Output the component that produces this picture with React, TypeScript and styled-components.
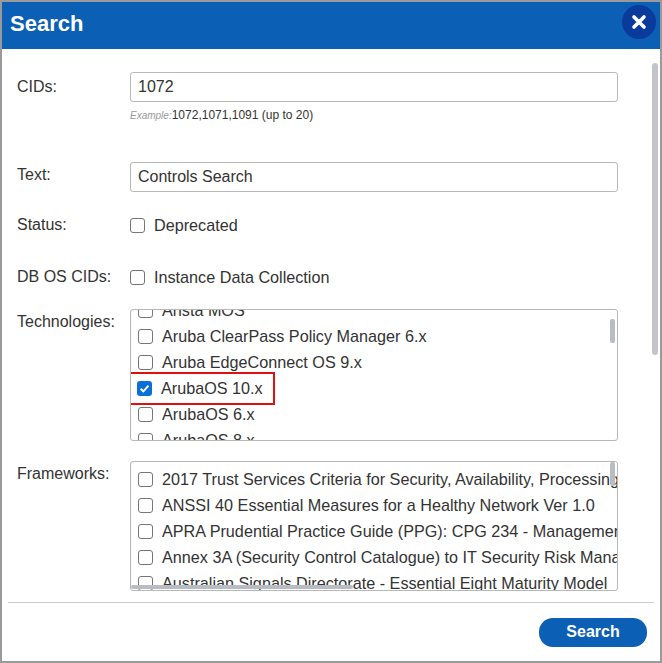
import React from 'react';
import styled, { createGlobalStyle } from 'styled-components';

const Global = createGlobalStyle`
  html, body { margin: 0; padding: 0; background: #fff; }
  body { font-family: "Liberation Sans", Arial, sans-serif; color: #333; }
`

const Dialog = styled.div`
  width: 662px;
  height: 663px;
  box-sizing: border-box;
  border: 2px solid #9a9a9a;
  display: flex;
  flex-direction: column;
  background: #fff;
`

const Header = styled.div`
  height: 47px;
  background: #0b5fb4;
  display: flex;
  align-items: center;
  justify-content: space-between;
  padding: 0 4px 0 8px;
  flex-shrink: 0;
`

const Title = styled.h1`
  margin: 0;
  color: #fff;
  font-size: 22px;
  font-weight: bold;
  margin-top: -4px;
`

const Close = styled.div`
  width: 34px;
  height: 34px;
  border-radius: 50%;
  background: #0a3a9c;
  color: #fff;
  display: flex;
  align-items: center;
  justify-content: center;
  margin-top: -8px;
`

const Body = styled.div`
  position: relative;
  flex: 1;
  padding: 23px 36px 0 9px;
  border-bottom: 1px solid #ccc;
  margin: 0 6px;
`

const BodyThumb = styled.div`
  position: absolute;
  right: -4px;
  top: 14px;
  width: 6px;
  height: 292px;
  border-radius: 3px;
  background: #c2c6ca;
`

const Row = styled.div<{ $mt?: number }>`
  display: flex;
  align-items: flex-start;
  margin-top: ${p => p.$mt ?? 0}px;
`

const Label = styled.div<{ $pt?: number }>`
  width: 113px;
  flex-shrink: 0;
  font-size: 16px;
  padding-top: ${p => p.$pt ?? 0}px;
`

const Field = styled.div`
  flex: 1;
  min-width: 0;
`

const Input = styled.div`
  height: 28px;
  border: 1px solid #b8b8b8;
  border-radius: 3px;
  font-size: 16px;
  display: flex;
  align-items: center;
  padding: 0 7px;
`

const Hint = styled.div`
  font-size: 12px;
  margin-top: 6px;
  i { color: #999; font-size: 10px; }
`

const Check = styled.label`
  display: flex;
  align-items: center;
  gap: 9px;
  font-size: 16.2px;
  height: 26px;
  white-space: nowrap;
`

const Box = styled.span<{ $on?: boolean }>`
  width: 15px;
  height: 15px;
  border-radius: 3px;
  flex-shrink: 0;
  box-sizing: border-box;
  border: ${p => (p.$on ? 'none' : '1px solid #767676')};
  background: ${p => (p.$on ? '#0b6fd8' : '#fff')};
  display: flex;
  align-items: center;
  justify-content: center;
`

const List = styled.div<{ $h: number }>`
  position: relative;
  height: ${p => p.$h}px;
  border: 1px solid #b8b8b8;
  border-radius: 3px;
  overflow: hidden;
`

const ListInner = styled.div<{ $shift: number }>`
  padding: 0 0 0 7px;
  transform: translateY(${p => p.$shift}px);
`

const VThumb = styled.div<{ $top: number; $h: number }>`
  position: absolute;
  right: 2px;
  top: ${p => p.$top}px;
  width: 5px;
  height: ${p => p.$h}px;
  border-radius: 2px;
  background: #b7bdc3;
`

const HThumb = styled.div`
  position: absolute;
  left: 0;
  bottom: 1px;
  width: 222px;
  height: 4px;
  border-radius: 2px;
  background: #b7bdc3;
`

const Highlight = styled.span`
  outline: 2px solid #e01010;
  display: flex;
  align-items: center;
  gap: 9px;
  padding: 5px 10px 5px 14px;
  margin-left: -15px;
`

const Footer = styled.div`
  height: 58px;
  display: flex;
  align-items: center;
  justify-content: flex-end;
  padding-right: 13px;
  flex-shrink: 0;
`

const Button = styled.button`
  width: 108px;
  height: 29px;
  border: none;
  border-radius: 14px;
  background: #0b5fb4;
  color: #fff;
  font-family: "Liberation Sans", Arial, sans-serif;
  font-weight: bold;
  font-size: 16px;
`

const Tick = () => (
  <svg width="11" height="11" viewBox="0 0 10 10">
    <path d="M1.5 5.2 L4 7.6 L8.6 2.4" stroke="#fff" strokeWidth="1.8" fill="none" />
  </svg>
)

const CheckItem = ({ text, on }: { text: string; on?: boolean }) => (
  <Check>
    <Box $on={on}>{on && <Tick />}</Box>
    {text}
  </Check>
)

const techs = ['Arista MOS', 'Aruba ClearPass Policy Manager 6.x', 'Aruba EdgeConnect OS 9.x', 'ArubaOS 10.x', 'ArubaOS 6.x', 'ArubaOS 8.x']
const frameworks = [
  '2017 Trust Services Criteria for Security, Availability, Processing Integrity',
  'ANSSI 40 Essential Measures for a Healthy Network Ver 1.0',
  'APRA Prudential Practice Guide (PPG): CPG 234 - Management of Security Risk',
  'Annex 3A (Security Control Catalogue) to IT Security Risk Management',
  'Australian Signals Directorate - Essential Eight Maturity Model',
]

export default function App() {
  return (
    <>
      <Global />
      <Dialog>
        <Header>
          <Title>Search</Title>
          <Close>
            <svg width="16" height="16" viewBox="0 0 16 16">
              <path d="M3 3 L13 13 M13 3 L3 13" stroke="#fff" strokeWidth="3.6" strokeLinecap="round" />
            </svg>
          </Close>
        </Header>
        <Body>
          <BodyThumb />
          <Row>
            <Label $pt={6}>CIDs:</Label>
            <Field>
              <Input>1072</Input>
              <Hint><i>Example:</i>1072,1071,1091 (up to 20)</Hint>
            </Field>
          </Row>
          <Row $mt={40}>
            <Label $pt={4}>Text:</Label>
            <Field><Input>Controls Search</Input></Field>
          </Row>
          <Row $mt={20}>
            <Label $pt={4}>Status:</Label>
            <Field><CheckItem text="Deprecated" /></Field>
          </Row>
          <Row $mt={26}>
            <Label $pt={4}>DB OS CIDs:</Label>
            <Field><CheckItem text="Instance Data Collection" /></Field>
          </Row>
          <Row $mt={19}>
            <Label $pt={4}>Technologies:</Label>
            <Field>
              <List $h={130}>
                <ListInner $shift={-13}>
                  {techs.map(t =>
                    t === 'ArubaOS 10.x' ? (
                      <Check key={t}>
                        <Highlight><Box $on><Tick /></Box>{t}</Highlight>
                      </Check>
                    ) : (
                      <CheckItem key={t} text={t} />
                    )
                  )}
                </ListInner>
                <VThumb $top={9} $h={24} />
              </List>
            </Field>
          </Row>
          <Row $mt={20}>
            <Label $pt={4}>Frameworks:</Label>
            <Field>
              <List $h={128}>
                <ListInner $shift={4}>
                  {frameworks.map(f => <CheckItem key={f} text={f} />)}
                </ListInner>
                <VThumb $top={0} $h={24} />
                <HThumb />
              </List>
            </Field>
          </Row>
        </Body>
        <Footer>
          <Button>Search</Button>
        </Footer>
      </Dialog>
    </>
  );
}
